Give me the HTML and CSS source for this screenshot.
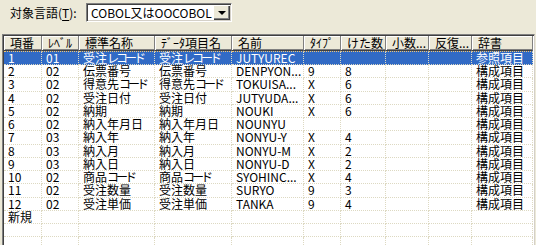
FILE: index.html
```html
<!DOCTYPE html>
<html lang="ja">
<head>
    <meta charset="UTF-8">
    <title>辞書項目一覧</title>
    <link rel="stylesheet" href="styles.css">
</head>
<body>
    <div class="toolbar">
        <span class="lang-label">対象言語(<u>T</u>):</span>
        <div class="combo">
            <span class="combo-text">COBOL又はOOCOBOL</span>
            <span class="combo-btn"><span class="arrow"></span></span>
        </div>
    </div>

    <div class="list-view">
        <table class="items">
            <colgroup>
                <col style="width:38px">
                <col style="width:37px">
                <col style="width:76px">
                <col style="width:77px">
                <col style="width:72px">
                <col style="width:37px">
                <col style="width:45px">
                <col style="width:43px">
                <col style="width:43px">
                <col style="width:61px">
            </colgroup>
            <thead>
                <tr>
                    <th>項番</th>
                    <th>ﾚﾍﾞﾙ</th>
                    <th>標準名称</th>
                    <th>ﾃﾞｰﾀ項目名</th>
                    <th>名前</th>
                    <th>ﾀｲﾌﾟ</th>
                    <th>けた数</th>
                    <th>小数...</th>
                    <th>反復...</th>
                    <th>辞書</th>
                </tr>
            </thead>
            <tbody>
                <tr class="selected">
                    <td>1</td><td>01</td><td>受注<span class="kana">レコード</span></td><td>受注<span class="kana">レコード</span></td><td>JUTYUREC</td>
                    <td></td><td></td><td></td><td></td><td>参照項目</td>
                </tr>
                <tr>
                    <td>2</td><td>02</td><td>伝票番号</td><td>伝票番号</td><td>DENPYON...</td>
                    <td>9</td><td>8</td><td></td><td></td><td>構成項目</td>
                </tr>
                <tr>
                    <td>3</td><td>02</td><td>得意先<span class="kana">コード</span></td><td>得意先<span class="kana">コード</span></td><td>TOKUISA...</td>
                    <td>X</td><td>6</td><td></td><td></td><td>構成項目</td>
                </tr>
                <tr>
                    <td>4</td><td>02</td><td>受注日付</td><td>受注日付</td><td>JUTYUDA...</td>
                    <td>X</td><td>6</td><td></td><td></td><td>構成項目</td>
                </tr>
                <tr>
                    <td>5</td><td>02</td><td>納期</td><td>納期</td><td>NOUKI</td>
                    <td>X</td><td>6</td><td></td><td></td><td>構成項目</td>
                </tr>
                <tr>
                    <td>6</td><td>02</td><td>納入年月日</td><td>納入年月日</td><td>NOUNYU</td>
                    <td></td><td></td><td></td><td></td><td>構成項目</td>
                </tr>
                <tr>
                    <td>7</td><td>03</td><td>納入年</td><td>納入年</td><td>NONYU-Y</td>
                    <td>X</td><td>4</td><td></td><td></td><td>構成項目</td>
                </tr>
                <tr>
                    <td>8</td><td>03</td><td>納入月</td><td>納入月</td><td>NONYU-M</td>
                    <td>X</td><td>2</td><td></td><td></td><td>構成項目</td>
                </tr>
                <tr>
                    <td>9</td><td>03</td><td>納入日</td><td>納入日</td><td>NONYU-D</td>
                    <td>X</td><td>2</td><td></td><td></td><td>構成項目</td>
                </tr>
                <tr>
                    <td>10</td><td>02</td><td>商品<span class="kana">コード</span></td><td>商品<span class="kana">コード</span></td><td>SYOHINC...</td>
                    <td>X</td><td>4</td><td></td><td></td><td>構成項目</td>
                </tr>
                <tr>
                    <td>11</td><td>02</td><td>受注数量</td><td>受注数量</td><td>SURYO</td>
                    <td>9</td><td>3</td><td></td><td></td><td>構成項目</td>
                </tr>
                <tr>
                    <td>12</td><td>02</td><td>受注単価</td><td>受注単価</td><td>TANKA</td>
                    <td>9</td><td>4</td><td></td><td></td><td>構成項目</td>
                </tr>
                <tr>
                    <td>新規</td><td></td><td></td><td></td><td></td>
                    <td></td><td></td><td></td><td></td><td></td>
                </tr>
                <tr>
                    <td></td><td></td><td></td><td></td><td></td>
                    <td></td><td></td><td></td><td></td><td></td>
                </tr>
                <tr>
                    <td></td><td></td><td></td><td></td><td></td>
                    <td></td><td></td><td></td><td></td><td></td>
                </tr>
            </tbody>
        </table>
    </div>
</body>
</html>
```

FILE: styles.css
```css
html, body {
    margin: 0;
    height: 245px;
    overflow: hidden;
}

body {
    background-color: #ece9d8;
    font-family: "Noto Sans CJK JP", sans-serif;
    font-size: 12px;
    color: #000;
}

.toolbar {
    display: flex;
    align-items: center;
    height: 19px;
    padding: 3px 0 12px 10px;
}

.lang-label {
    width: 76px;
    line-height: 19px;
}

.lang-label u {
    text-decoration-thickness: 1px;
    text-underline-offset: 2px;
}

.combo {
    display: flex;
    align-items: center;
    box-sizing: border-box;
    width: 146px;
    height: 19px;
    background-color: #fff;
    border: 1px solid;
    border-color: #808080 #fff #fff #808080;
    box-shadow: inset 1px 1px #404040, inset -1px -1px #d4d0c8;
}

.combo-text {
    flex: 1;
    padding-left: 4px;
    line-height: 15px;
    white-space: nowrap;
}

.combo-btn {
    display: flex;
    align-items: center;
    justify-content: center;
    box-sizing: border-box;
    width: 17px;
    height: 15px;
    margin-right: 1px;
    background-color: #ece9d8;
    box-shadow: inset 1px 1px #fff, inset -1px -1px #404040, inset -2px -2px #808080;
}

.arrow {
    width: 0;
    height: 0;
    margin-top: 1px;
    border-left: 4px solid transparent;
    border-right: 4px solid transparent;
    border-top: 4px solid #000;
}

.list-view {
    margin-left: 2px;
    width: 531px;
    height: 215px;
    overflow: hidden;
    background-color: #fff;
    border-top: 1px solid #808080;
    border-left: 1px solid #808080;
    border-right: 1px solid #d4d0c8;
    box-shadow: inset 1px 1px #404040;
}

.items {
    border-collapse: separate;
    border-spacing: 0;
    table-layout: fixed;
    width: 529px;
    margin: 1px 0 0 1px;
}

.items th {
    height: 14px;
    padding: 0 0 0 6px;
    font-weight: normal;
    text-align: left;
    line-height: 14px;
    white-space: nowrap;
    background-color: #ece9d8;
    border-right: 1px solid #808080;
    border-bottom: 1px solid #404040;
    box-shadow: inset 1px 1px #fff, inset 0 -1px #808080;
}

.items tbody tr {
    height: 13.25px;
}

.items td {
    padding: 0 0 0 4px;
    line-height: 12px;
    white-space: nowrap;
    border-right: 1px dotted #ddd9c2;
    border-bottom: 1px dotted #ddd9c2;
}

/* MS UI Gothic draws kana narrower than kanji */
.kana {
    letter-spacing: -3px;
}

.items tr.selected td {
    background-color: #316ac5;
    color: #fff;
    border-top: 1px dotted #f3c46f;
}
```
